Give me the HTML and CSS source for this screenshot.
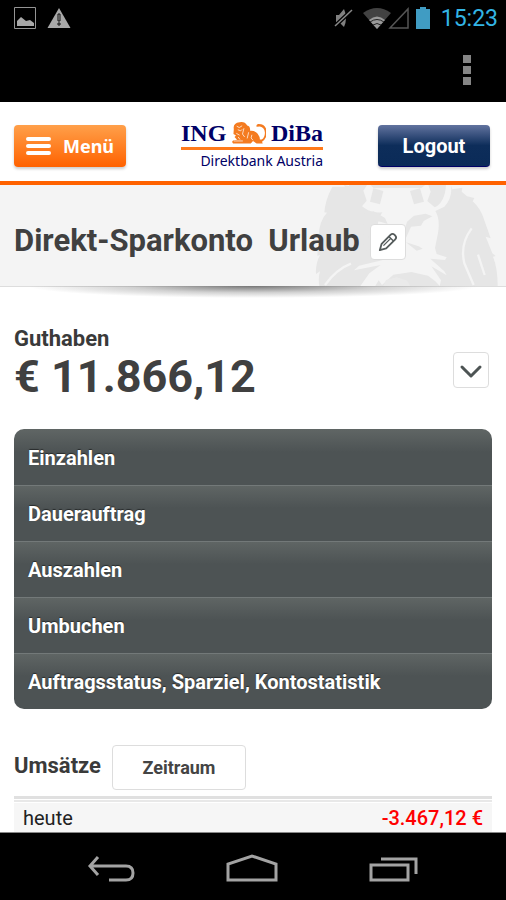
FILE: index.html
```html
<!DOCTYPE html>
<html lang="de">
<head>
    <meta charset="utf-8">
    <meta name="viewport" content="width=device-width, initial-scale=1.0">
    <title>Direkt-Sparkonto</title>
    <link rel="stylesheet" href="styles.css">
</head>
<body>

    <div class="system">
        <div class="status">
            <svg class="notes" width="58" height="24" viewBox="0 0 58 24">
                <path d="M1.500 1.500h21v21h-21z" fill="none" stroke="#949494"/>
                <path d="M4 20v-5l4-4 5 4 4-1 4 3v3z" fill="#a8a8a8"/>
                <path d="M46 2l11.500 20h-23z" fill="#a8a8a8"/>
                <path d="M45 8h2v7h-2zM45 17h2v2h-2z" fill="#a8a8a8" stroke="#111"/>
            </svg>
            <svg width="98" height="24" viewBox="0 0 98 24">
                <path d="M3 9h3l5-6q4 9 0 18l-5-5h-3z" fill="#808080"/>
                <path d="M2 20l17-16" stroke="#000" stroke-width="4"/>
                <path d="M2 20l17-16" stroke="#888" stroke-width="1.500"/>
                <path d="M30 7q14-10 28 0l-14 16z" fill="#424242"/>
                <path d="M36 14q8-7 16 0l-8 9z" fill="#999"/>
                <path d="M37 16q7-5 14 0M40 19q4-3 8 0" fill="none" stroke="#222"/>
                <path d="M75 3v19h-18z" fill="none" stroke="#555" stroke-width="1.500"/>
                <path d="M83 3h4v-2h6v2h4v20h-14z" fill="#409cc3"/>
            </svg>
            <span class="clock">15:23</span>
        </div>
        <button class="more" type="button" aria-label="Mehr"><i></i><i></i><i></i></button>
    </div>

    <header class="header">
        <button class="btn btn-menu" type="button">
            <svg width="26" height="20" viewBox="0 0 26 20">
                <path d="M2 3h21M2 10h21M2 17h21" stroke="#fff" stroke-width="4" stroke-linecap="round"/>
            </svg>
            Menü
        </button>
        <a class="logo" href="#" aria-label="ING-DiBa Direktbank Austria">
            <span class="logo-name">
                ING
                <svg width="34" height="24" viewBox="10 0 94 66">
                    <path d="M15 22Q12 5 31 3q14-3 21 9 9 1 8 15 14-1 21 8 7 10 6 16h5q9-6 9-19-1-14-14-17l-9 1q-2-6 4-8 20-1 24 19 2 21-13 30l2 5H78l-10-7-6 7H13q-6-6 2-9l9-1-7-8 4-4-7-4z" fill="#f47b20"/>
                    <path d="M23 14l7 4 8-5M26 24l8 3 4-4M22 34l9 5M43 20l-4 16 6 8M27 44l5 7M56 31l-4 17M65 38q-6 10 3 15M15 55h25" fill="none" stroke="#fff" stroke-width="2"/>
                </svg>
                DiBa
            </span>
            <span class="logo-sub">Direktbank Austria</span>
        </a>
        <button class="btn btn-logout" type="button">Logout</button>
    </header>

    <div class="title">
        <svg class="lion" width="206" height="101" viewBox="0 15 618 303">
            <path d="M97 20h38l-3-5h320l5 13 30-5-2 12 16 14 22 5-5 10q25 22 36 60l18 51-15-5 20 50 10 8-8 2q14 34 14 88H58q-4-26 2-44l-12 8q-2-30 12-57l-8 2q0-40 14-60l-10 6q0-50 25-75l-8-1q2-35 24-77z" fill="#e6e6e6"/>
            <path d="M132 15h80l8 9h145l10-9h78q5 40-20 65l-27 13q15 24 8 66l-9 45 5 18 30 10-5 8-44-4 42 38 7 12-46-27 29 42-4 17-13-14-22-17-50-11-54 8-34 31-10-14-10 17h-45l27-38 34-25-80 16 15-14 75-18-18-24-3-48 4-50 12-20q-32 3-55-14-29-20-23-60z" fill="#f4f4f4"/>
            <path d="M147 15h54l-11 17 10 30-18 21q-31-12-35-68zM385 15h53q-3 52-34 67l-22-19 10-28z" fill="#e6e6e6"/>
            <path d="M220 25l30 8-10 40-30-8zM330 33l30-8 12 40-30 8zM191 103l30-9 34 20 8 18-22-7-30-3zM321 125l21-18 35-6 20 8-26 14-8 14-30 3-18 40-8-8zM190 132l25 60-12 30-11-26zM318 187l38 12 12 7-18 6z" fill="#e6e6e6"/>
            <path d="M250 318l8-18 32-8 32 10 8 16z" fill="#eaeaea"/>
            <path d="M75 315q35-48 78-64M515 145q-36 48-22 105l28 65M534 224l20 61" fill="none" stroke="#f4f4f4" stroke-width="7"/>
        </svg>
        <h1>Direkt-Sparkonto&nbsp; Urlaub</h1>
        <button class="icon-btn" type="button" aria-label="Bearbeiten">
            <svg width="20" height="20" viewBox="0 0 22 22" fill="none" stroke="#555b5b" stroke-width="2" stroke-linejoin="round">
                <path d="M2 20l2-7L14 3q2-2 4 0l1 1q2 2 0 4L9 18z"/>
                <path d="M12 5l5 5M6 15l8-8" stroke-width="1.500"/>
            </svg>
        </button>
    </div>

    <main class="content">
        <section class="balance">
            <div>
                <h2>Guthaben</h2>
                <p class="amount">€ 11.866,12</p>
            </div>
            <button class="icon-btn" type="button" aria-label="Details">
                <svg width="24" height="24" viewBox="0 0 24 24">
                    <path d="M3 9l9 9 9-9" fill="none" stroke="#4d5454" stroke-width="3" stroke-linecap="round" stroke-linejoin="round"/>
                </svg>
            </button>
        </section>

        <nav class="actions">
            <a href="#">Einzahlen</a>
            <a href="#">Dauerauftrag</a>
            <a href="#">Auszahlen</a>
            <a href="#">Umbuchen</a>
            <a href="#">Auftragsstatus, Sparziel, Kontostatistik</a>
        </nav>

        <section class="sales">
            <div class="sales-head">
                <h2>Umsätze</h2>
                <button class="period" type="button">Zeitraum</button>
            </div>
            <table>
                <tr>
                    <td>heute</td>
                    <td class="negative">-3.467,12 €</td>
                </tr>
            </table>
        </section>
    </main>

    <footer class="navbar">
        <button type="button" aria-label="Zurück">
            <svg width="48" height="30" viewBox="0 0 48 30" fill="none" stroke="#a3a3a3" stroke-width="3">
                <path d="M11 4l-8 9 8 9M3 13h36q7 0 7 7t-7 7h-17"/>
            </svg>
        </button>
        <button type="button" aria-label="Start">
            <svg width="54" height="30" viewBox="0 0 54 30" fill="none" stroke="#a3a3a3" stroke-width="3">
                <path d="M3 27v-16l24-8 24 8v16z"/>
            </svg>
        </button>
        <button type="button" aria-label="Letzte Apps">
            <svg width="50" height="30" viewBox="0 0 50 30" fill="none" stroke="#a3a3a3" stroke-width="3">
                <path d="M2 12h37v15h-37zM12 6h35v15"/>
            </svg>
        </button>
    </footer>

</body>
</html>
```
FILE: styles.css
```css
* {
    box-sizing: border-box;
}

body {
    display: flex;
    flex-direction: column;
    height: 100vh;
    margin: 0;
    background: #fff;
    color: #404040;
    font-family: Roboto, "Liberation Sans", sans-serif;
    font-size: 20px;
}

h1, h2, p {
    margin: 0;
}

h2 {
    font-size: 22px;
    line-height: 28px;
    font-weight: 700;
    color: #3a3a3a;
}

button {
    padding: 0;
    border: 0;
    font-family: inherit;
    cursor: pointer;
}

a {
    text-decoration: none;
}

svg {
    display: block;
}

/* system bars */
.system {
    flex: none;
    height: 102px;
    background: #000;
}

.status {
    display: flex;
    align-items: center;
    height: 36px;
    padding: 0 8px 0 13px;
}
.status .notes {
    margin-right: auto;
}

.clock {
    margin-left: 10px;
    color: #33b5e5;
    font-size: 23px;
}

.more {
    display: grid;
    gap: 3px;
    margin: 19px 35px 0 auto;
    background: none;
}
.more i {
    width: 8px;
    height: 8px;
    background: #858585;
}

.navbar {
    flex: none;
    display: flex;
    justify-content: space-around;
    align-items: center;
    height: 68px;
    padding: 2px 42px 0;
    border-top: 1px solid #888;
    background: #000;
}
.navbar button {
    background: none;
}

/* header */
.header {
    flex: none;
    display: flex;
    justify-content: space-between;
    align-items: center;
    height: 83px;
    padding: 8px 16px 0 14px;
    border-bottom: 4px solid #ff6200;
}

.btn {
    display: flex;
    align-items: center;
    justify-content: center;
    width: 112px;
    height: 42px;
    border-radius: 4px;
    color: #fff;
    font-size: 20px;
    font-weight: 700;
    box-shadow: 0 2px 3px rgba(0, 0, 0, 0.2);
}

.btn-menu {
    gap: 11px;
    background: linear-gradient(#ffa04a, #ff6200);
    font-family: "Noto Sans", sans-serif;
    font-size: 18px;
}

.btn-logout {
    padding-top: 2px;
    background: linear-gradient(#62739f, #0d2d5a 50%, #0b2b58);
    border-bottom: 1px solid #000066;
}

.logo {
    width: 142px;
    color: #000066;
}

.logo-name {
    display: flex;
    justify-content: space-between;
    align-items: center;
    height: 30px;
    border-bottom: 3px solid #ff7a1a;
    font: bold 24px/28px "Liberation Serif", serif;
}

.logo-sub {
    display: block;
    font: 14px/22px "Noto Sans", sans-serif;
    text-align: right;
    white-space: nowrap;
}

/* account title */
.title {
    flex: none;
    position: relative;
    display: flex;
    align-items: center;
    gap: 10px;
    height: 102px;
    padding: 12px 14px 0;
    border-bottom: 1px solid #ddd;
    background: #f4f4f4;
}
.title::after {
    content: "";
    position: absolute;
    top: 101px;
    left: 28px;
    right: 28px;
    height: 12px;
    background: radial-gradient(closest-side, #777, rgba(140, 140, 140, 0.4) 55%, transparent) center bottom / 100% 24px no-repeat;
}

.lion {
    position: absolute;
    top: 0;
    right: 0;
}

h1 {
    position: relative;
    padding-bottom: 2px;
    font-size: 31px;
    line-height: 40px;
    font-weight: 700;
    white-space: nowrap;
}

.title::after {
    background-position: center top -12px;
}

.icon-btn {
    position: relative;
    flex: none;
    display: flex;
    align-items: center;
    justify-content: center;
    width: 36px;
    height: 36px;
    border: 1px solid #ddd;
    border-radius: 4px;
    background: #fff;
}

/* content */
.content {
    flex: 1;
    min-height: 0;
    padding: 38px 14px 0;
    overflow: hidden;
}

.balance {
    display: flex;
    justify-content: space-between;
    align-items: flex-end;
    padding-right: 3px;
}
.balance .icon-btn {
    margin-bottom: 13px;
}

.amount {
    font-size: 45px;
    line-height: 48px;
    font-weight: 700;
}

.actions {
    margin-top: 28px;
    border-radius: 10px;
    overflow: hidden;
}
.actions a {
    display: block;
    height: 56px;
    padding-left: 14px;
    border-top: 1px solid #737979;
    background: linear-gradient(#5f6564, #4d5354 40%, #4d5354);
    color: #fff;
    font-weight: 700;
    line-height: 56px;
    text-shadow: 0 -1px 1px rgba(0, 0, 0, 0.5);
}
.actions a:first-child {
    border-top-color: #5f6564;
}

.sales {
    margin-top: 36px;
}

.sales-head {
    display: flex;
    align-items: center;
    gap: 11px;
    margin-bottom: 6px;
}
.sales-head h2 {
    padding-bottom: 4px;
}

.period {
    width: 134px;
    height: 45px;
    border: 1px solid #ddd;
    border-radius: 4px;
    background: #fff;
    color: #444;
    font-size: 18px;
    font-weight: 700;
}

table {
    width: 100%;
    border-top: 3px solid #e0e0e0;
    border-spacing: 0;
    background: #f6f6f6;
    box-shadow: inset 0 1px #fff, inset 0 3px #e8e8e8, inset 0 4px #fff;
    color: #222;
}

td {
    padding: 4px 9px 0;
    line-height: 31px;
}

.negative {
    color: #f00;
    font-weight: 500;
    text-align: right;
}
```
